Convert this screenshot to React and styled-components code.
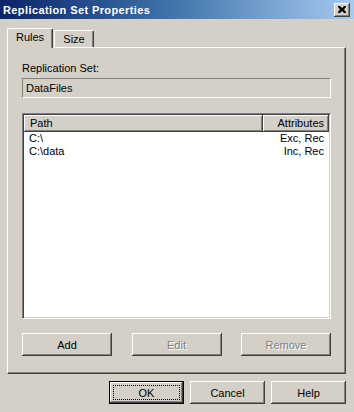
import styled, { createGlobalStyle } from "styled-components";

const FACE = "#d4d0c8";

const raised = `
  box-shadow: inset -1px -1px #404040, inset 1px 1px #ffffff,
    inset -2px -2px #808080, inset 2px 2px ${FACE};
`;

const GlobalStyle = createGlobalStyle`
  html, body {
    margin: 0;
    padding: 0;
    background: ${FACE};
  }
  body {
    font-family: "Liberation Sans", Arial, sans-serif;
    font-size: 11px;
    color: #000;
  }
`;

const Window = styled.div`
  width: 354px;
  height: 412px;
  box-sizing: border-box;
  background: ${FACE};
  display: flex;
  flex-direction: column;
  overflow: hidden;
`;

const TitleBar = styled.div`
  height: 19px;
  display: flex;
  align-items: center;
  justify-content: space-between;
  padding: 0 4px 0 3px;
  background: linear-gradient(to right, #0a246a 0%, #3a6ea5 45%, #a6caf0 100%);
`;

const Title = styled.span`
  color: #fff;
  font-weight: bold;
  font-size: 11px;
  letter-spacing: 0.4px;
`;

const CloseButton = styled.div`
  width: 16px;
  height: 14px;
  background: ${FACE};
  ${raised}
  display: grid;
  place-items: center;
`;

const Body = styled.div`
  flex: 1;
  display: flex;
  flex-direction: column;
  padding: 8px 8px 0 7px;
`;

const TabRow = styled.div`
  display: flex;
  align-items: flex-end;
  height: 20px;
  position: relative;
  z-index: 1;
`;

const Tab = styled.div`
  box-sizing: border-box;
  height: ${(p) => (p.$active ? "20px" : "17px")};
  width: ${(p) => p.$width}px;
  margin-left: ${(p) => (p.$active ? "0" : "1px")};
  margin-bottom: ${(p) => (p.$active ? "-1px" : "0")};
  background: ${FACE};
  border-top: 1px solid #fff;
  border-left: 1px solid #fff;
  border-right: 1px solid #404040;
  box-shadow: inset -1px 0 #808080;
  border-radius: 2px 2px 0 0;
  display: flex;
  align-items: center;
  justify-content: center;
  padding-bottom: ${(p) => (p.$active ? "3px" : "0")};
`;

const Panel = styled.div`
  width: 339px;
  height: 327px;
  box-sizing: border-box;
  border-top: 1px solid #fff;
  border-left: 1px solid #fff;
  border-right: 1px solid #404040;
  border-bottom: 1px solid #404040;
  box-shadow: inset -1px -1px #808080;
  padding: 14px 14px 0 14px;
  display: flex;
  flex-direction: column;
`;

const Label = styled.div`
  height: 13px;
  line-height: 13px;
  margin-bottom: 3px;
`;

const ReadOnlyField = styled.div`
  height: 20px;
  box-sizing: border-box;
  border-top: 1px solid #808080;
  border-left: 1px solid #808080;
  border-bottom: 1px solid #fff;
  border-right: 1px solid #fff;
  padding: 0 3px;
  display: flex;
  align-items: center;
`;

const ListView = styled.div`
  margin-top: 15px;
  height: 206px;
  box-sizing: border-box;
  background: #fff;
  border-top: 1px solid #808080;
  border-left: 1px solid #808080;
  border-bottom: 1px solid #fff;
  border-right: 1px solid #fff;
  box-shadow: inset 1px 1px #404040, inset -1px -1px ${FACE};
  padding: 1px;
  display: flex;
  flex-direction: column;
`;

const Header = styled.div`
  display: grid;
  grid-template-columns: 239px 1fr;
  height: 17px;
`;

const HeaderCell = styled.div`
  background: ${FACE};
  ${raised}
  display: flex;
  align-items: center;
  justify-content: ${(p) => (p.$right ? "flex-end" : "flex-start")};
  padding: 0 5px 1px 6px;
`;

const Row = styled.div`
  display: grid;
  grid-template-columns: 239px 1fr;
  height: 13px;
  line-height: 13px;
  &:first-of-type {
    margin-top: 2px;
  }
`;

const Cell = styled.div`
  padding: 0 5px 0 5px;
  text-align: ${(p) => (p.$right ? "right" : "left")};
`;

const ButtonRow = styled.div`
  display: flex;
  justify-content: space-between;
  margin-top: 14px;
`;

const Button = styled.div`
  box-sizing: border-box;
  width: ${(p) => p.$width}px;
  height: 23px;
  background: ${FACE};
  ${raised}
  display: flex;
  align-items: center;
  justify-content: center;
  color: ${(p) => (p.$disabled ? "#808080" : "#000")};
  text-shadow: ${(p) => (p.$disabled ? "1px 1px #fff" : "none")};
`;

const DefaultButton = styled(Button)`
  border: 1px solid #000;
  position: relative;
  &::after {
    content: "";
    position: absolute;
    inset: 3px;
    border: 1px dotted #000;
  }
`;

const Footer = styled.div`
  display: flex;
  justify-content: flex-end;
  gap: 6px;
  margin-top: 7px;
`;

export default function App() {
  return (
    <>
      <GlobalStyle />
      <Window>
        <TitleBar>
          <Title>Replication Set Properties</Title>
          <CloseButton>
            <svg width="8" height="7" viewBox="0 0 8 7">
              <path d="M0 0h2l2 2 2-2h2v1L6 3.5 8 6v1H6L4 5 2 7H0V6l2-2.5L0 1z" fill="#000" />
            </svg>
          </CloseButton>
        </TitleBar>
        <Body>
          <TabRow>
            <Tab $active $width={46}>Rules</Tab>
            <Tab $width={40}>Size</Tab>
          </TabRow>
          <Panel>
            <Label>Replication Set:</Label>
            <ReadOnlyField>DataFiles</ReadOnlyField>
            <ListView>
              <Header>
                <HeaderCell>Path</HeaderCell>
                <HeaderCell $right>Attributes</HeaderCell>
              </Header>
              <Row>
                <Cell>C:\</Cell>
                <Cell $right>Exc, Rec</Cell>
              </Row>
              <Row>
                <Cell>C:\data</Cell>
                <Cell $right>Inc, Rec</Cell>
              </Row>
            </ListView>
            <ButtonRow>
              <Button $width={90}>Add</Button>
              <Button $width={90} $disabled>Edit</Button>
              <Button $width={90} $disabled>Remove</Button>
            </ButtonRow>
          </Panel>
          <Footer>
            <DefaultButton $width={75}>OK</DefaultButton>
            <Button $width={75}>Cancel</Button>
            <Button $width={75}>Help</Button>
          </Footer>
        </Body>
      </Window>
    </>
  );
}
